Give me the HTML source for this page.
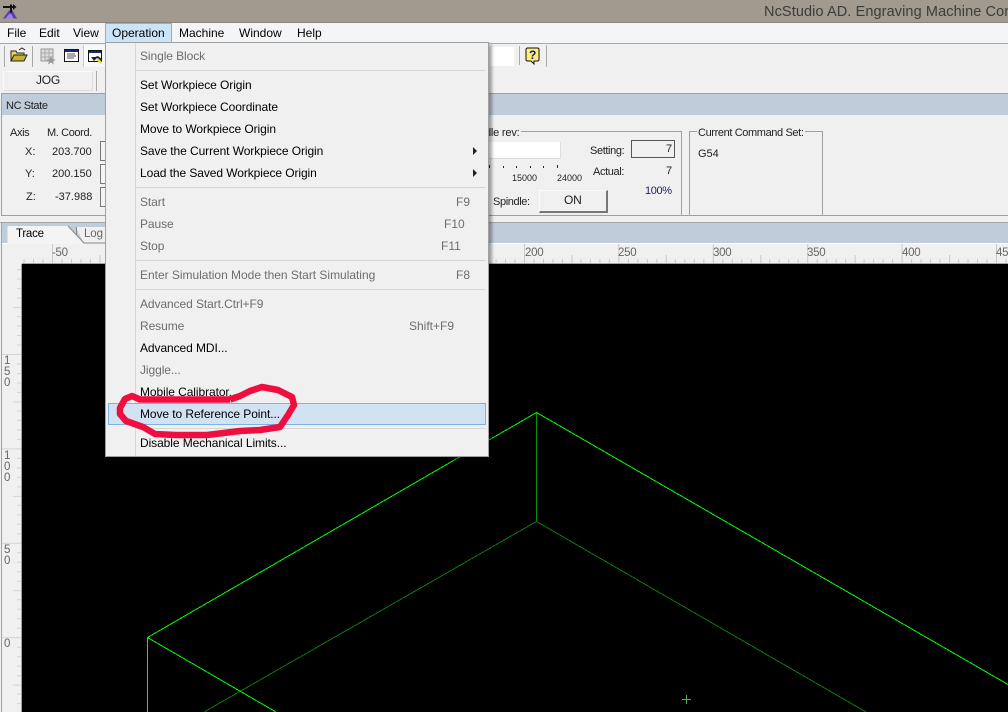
<!DOCTYPE html>
<html><head><meta charset="utf-8">
<style>
html,body{margin:0;padding:0;background:#f0f0f0}
#r{position:relative;width:1008px;height:712px;overflow:hidden;background:#f0f0f0;font-family:"Liberation Sans",sans-serif;font-size:12px;color:#000}
.b{position:absolute;box-sizing:border-box}
.t{position:absolute;white-space:nowrap;line-height:16px;height:16px}
.m{color:#000;left:140px;letter-spacing:-.08px}
.d{color:#6d6d6d}
.s{font-size:11px;color:#222;letter-spacing:-.38px}
.n{font-size:11px;color:#222}
.rl{font-size:11.5px;color:#666;letter-spacing:-.3px}
.sp{position:absolute;left:136px;width:350px;height:1px;background:#d7d7d7}
</style></head><body><div id="r">

<!-- title bar -->
<div class="b" style="left:0;top:0;width:1008px;height:23px;background:#a2998f;border-bottom:1px solid #8b847d"></div>
<svg class="b" style="left:0;top:0" width="22" height="22" viewBox="0 0 22 22"><path d="M3 18.500L9 10.500l2 1 1.500-1 4.500 8z" fill="#5b3fb0"/><path d="M5.500 18.500l4-5 2 1 2 4z" fill="#9a86e0"/><path d="M3 7h11M11 4.500v8" stroke="#111" stroke-width="2" fill="none"/><path d="M13 4l3.500 3-3.500 3z" fill="#111"/></svg>
<div class="t" style="left:764px;top:4px;font-size:14.5px;color:#3c3c3c;letter-spacing:.1px">NcStudio AD. Engraving Machine Control</div>

<!-- menu bar -->
<div class="b" style="left:0;top:23px;width:1008px;height:20px;background:#f4f5f7"></div>
<div class="b" style="left:0;top:43px;width:1008px;height:1px;background:#a8a8a8"></div>
<div class="b" style="left:105px;top:23px;width:67px;height:20px;background:#cce4f7;border:1px solid #7db2e4"></div>
<div class="t" style="left:7px;top:25px">File</div>
<div class="t" style="left:39px;top:25px">Edit</div>
<div class="t" style="left:73px;top:25px">View</div>
<div class="t" style="left:112px;top:25px">Operation</div>
<div class="t" style="left:179px;top:25px">Machine</div>
<div class="t" style="left:239px;top:25px">Window</div>
<div class="t" style="left:297px;top:25px">Help</div>

<!-- toolbar -->
<div class="b" style="left:4px;top:46px;width:1px;height:21px;background:#a8a8a8"></div>
<svg class="b" style="left:10px;top:47px" width="18" height="16" viewBox="0 0 18 16"><path d="M1 14V4h5l1 2h7v8z" fill="#e8d860" stroke="#222"/><path d="M1 14l3-6h13l-3 6z" fill="#c8b030" stroke="#222"/><path d="M9 3l3-2 3 2" stroke="#222" fill="none"/></svg>
<div class="b" style="left:32px;top:46px;width:1px;height:21px;background:#a8a8a8"></div>
<svg class="b" style="left:40px;top:48px" width="17" height="17" viewBox="0 0 17 17"><path d="M1 1h12v12H1z" fill="#ddd" stroke="#999"/><path d="M1 5h12M1 9h12M5 1v12M9 1v12" stroke="#aaa"/><path d="M11 8l1.500 3.500H16l-3 2 1 3-3-2-3 2 1-3-3-2h3.500z" fill="#999"/></svg>
<svg class="b" style="left:64px;top:49px" width="15" height="13" viewBox="0 0 15 13"><path d="M.5.500h14v12H.5z" fill="#fff" stroke="#111"/><path d="M1 1h13v2H1z" fill="#102a80"/><path d="M3 5h8M3 7h9M3 9h7" stroke="#555"/></svg>
<div class="b" style="left:83px;top:45px;width:23px;height:22px;background:#f8f8f8;border-left:1px solid #ccc"></div>
<svg class="b" style="left:88px;top:50px" width="15" height="15" viewBox="0 0 15 15"><path d="M.5.500h13v11H.5z" fill="#fff" stroke="#111"/><path d="M1 1h12v2H1z" fill="#102a80"/><path d="M3 7l3 4 3-3 4 5 1-4-4-3-3 1z" fill="#222"/><path d="M8 10l5 4 1-2-4-4z" fill="#e8dc40"/></svg>
<div class="b" style="left:490px;top:47px;width:24px;height:19px;background:#fff"></div>
<div class="b" style="left:519px;top:46px;width:1px;height:19px;background:#a8a8a8"></div>
<svg class="b" style="left:525px;top:47px" width="16" height="18" viewBox="0 0 16 18"><path d="M2 1h11l1 1v11l-1 1H9v3l-3-3H2l-1-1V2z" fill="#fff070" stroke="#111"/><text x="4" y="12" font-family="Liberation Sans" font-size="12" font-weight="bold" fill="#101090">?</text></svg>
<div class="b" style="left:546px;top:45px;width:1px;height:22px;background:#a8a8a8"></div>

<!-- mode row -->
<div class="b" style="left:3px;top:71px;width:90px;height:20px;border:1px solid #fafafa;border-right-color:#ddd;border-bottom-color:#ddd"></div>
<div class="t n" style="left:36px;top:72px;font-size:12px;letter-spacing:-.2px">JOG</div>
<div class="b" style="left:96px;top:71px;width:12px;height:20px;border-left:1px solid #aaa"></div>

<!-- NC state -->
<div class="b" style="left:1px;top:93px;width:1007px;height:123px;border-top:1px solid #a0a0a0;border-left:1px solid #a0a0a0;border-bottom:1px solid #a0a0a0"></div>
<div class="b" style="left:2px;top:94px;width:1006px;height:21px;background:#bfccd9"></div>
<div class="t s" style="left:6px;top:98px">NC State</div>
<div class="t s" style="left:10px;top:125px">Axis</div>
<div class="t s" style="left:47px;top:125px">M. Coord.</div>
<div class="t n" style="left:25px;top:144px">X:</div><div class="t n" style="left:52px;top:144px">203.700</div>
<div class="t n" style="left:25px;top:166px">Y:</div><div class="t n" style="left:52px;top:166px">200.150</div>
<div class="t n" style="left:26px;top:189px">Z:</div><div class="t n" style="left:55px;top:189px">-37.988</div>
<div class="b" style="left:100px;top:141px;width:10px;height:20px;border:1px solid #777;background:#f4f4f4"></div>
<div class="b" style="left:100px;top:164px;width:10px;height:20px;border:1px solid #777;background:#f4f4f4"></div>
<div class="b" style="left:100px;top:187px;width:10px;height:20px;border:1px solid #777;background:#f4f4f4"></div>

<!-- spindle group -->
<div class="b" style="left:480px;top:131px;width:202px;height:86px;border:1px solid #a0a0a0;border-bottom:0;border-left:0"></div>
<div class="t n" style="left:485px;top:125px;background:#f0f0f0;padding-right:2px;letter-spacing:-.2px">dle rev:</div>
<div class="b" style="left:480px;top:142px;width:81px;height:17px;background:#fff;border-right:1px solid #ddd;border-bottom:1px solid #ddd"></div>
<svg class="b" style="left:480px;top:164px" width="90" height="6"><path d="M9.500 1v3M23.500 2v2M36.500 2v2M50.500 2v2M63.500 2v2M77.500 1v3" stroke="#222"/></svg>
<div class="t" style="left:512px;top:170px;font-size:9px;color:#222">15000</div>
<div class="t" style="left:557px;top:170px;font-size:9px;color:#222">24000</div>
<div class="t s" style="left:590px;top:143px">Setting:</div>
<div class="b" style="left:631px;top:140px;width:44px;height:18px;border:1px solid #555;background:#f0f0f0"></div>
<div class="t n" style="left:666px;top:141px">7</div>
<div class="t s" style="left:593px;top:164px">Actual:</div>
<div class="t n" style="left:666px;top:163px">7</div>
<div class="t s" style="left:645px;top:183px;color:#202070">100%</div>
<div class="t s" style="left:493px;top:194px">Spindle:</div>
<div class="b" style="left:539px;top:190px;width:69px;height:23px;background:#f0f0f0;border:1px solid #fafafa;border-right:2px solid #777;border-bottom:2px solid #777"></div>
<div class="t n" style="left:564px;top:192px;font-size:12px;letter-spacing:-.2px">ON</div>

<!-- command set -->
<div class="b" style="left:689px;top:131px;width:134px;height:86px;border:1px solid #a0a0a0;border-bottom:0"></div>
<div class="t s" style="left:697px;top:125px;background:#f0f0f0;padding:0 1px">Current Command Set:</div>
<div class="t n" style="left:698px;top:146px">G54</div>

<!-- trace header -->
<div class="b" style="left:0;top:216px;width:1008px;height:7px;background:#f0f0f0"></div>
<div class="b" style="left:0;top:222px;width:1008px;height:1px;background:#a8a8a8"></div>
<div class="b" style="left:2px;top:223px;width:1006px;height:20px;background:#bfccd9"></div>
<div class="b" style="left:1px;top:222px;width:1px;height:490px;background:#a0a0a0"></div>
<svg class="b" style="left:6px;top:223px" width="105" height="22"><path d="M2 3H62l16 18H2z" fill="#f4f4f4"/><path d="M2 21V3" stroke="#f4f4f4"/><path d="M70 4h35v17H78z" fill="#f0f0f0"/><path d="M62 3l16 17h27" stroke="#888" fill="none"/><path d="M70.500 4v8" stroke="#888" fill="none"/></svg>
<div class="t" style="left:16px;top:226px;font-size:11.5px;letter-spacing:-.25px">Trace</div>
<div class="t" style="left:84px;top:226px;font-size:11.5px;letter-spacing:-.1px;color:#666">Log</div>
<div class="b" style="left:2px;top:243px;width:6px;height:1px;background:#fff"></div>
<div class="b" style="left:110px;top:243px;width:898px;height:1px;background:#fff"></div>

<!-- rulers -->
<svg class="b" style="left:0;top:244px" width="1008" height="20" shape-rendering="crispEdges">
<defs><pattern id="h" x="52" y="0" width="94.4" height="20" patternUnits="userSpaceOnUse"><path d="M.5 0v19M9.940 15v4M19.380 15v4M28.820 15v4M38.260 15v4M47.700 11v8M57.140 15v4M66.580 15v4M76.020 15v4M85.460 15v4" stroke="#cacaca" fill="none"/></pattern></defs>
<rect x="22" width="986" height="19" fill="url(#h)"/><rect x="22" y="19" width="986" height="1" fill="#a4a4a4"/></svg>
<svg class="b" style="left:0;top:264px" width="22" height="448" shape-rendering="crispEdges">
<defs><pattern id="v" x="0" y="90" width="22" height="94.4" patternUnits="userSpaceOnUse"><path d="M2 .5h19M17 9.940h4M17 19.380h4M17 28.820h4M17 38.260h4M13 47.700h8M17 57.140h4M17 66.580h4M17 76.020h4M17 85.460h4" stroke="#d4d4d4" fill="none"/></pattern></defs>
<rect x="2" width="20" height="448" fill="url(#v)"/><rect x="21" width="1" height="448" fill="#a4a4a4"/></svg>
<div class="t rl" style="left:52px;top:245px">-50</div>
<div class="t rl" style="left:525px;top:245px">200</div>
<div class="t rl" style="left:618px;top:245px">250</div>
<div class="t rl" style="left:713px;top:245px">300</div>
<div class="t rl" style="left:807px;top:245px">350</div>
<div class="t rl" style="left:902px;top:245px">400</div>
<div class="t rl" style="left:996px;top:245px">450</div>
<div class="t rl" style="left:4px;top:356px;line-height:11px;height:33px;width:9px;white-space:normal">1 5 0</div>
<div class="t rl" style="left:4px;top:451px;line-height:11px;height:33px;width:9px;white-space:normal">1 0 0</div>
<div class="t rl" style="left:4px;top:545px;line-height:11px;height:22px;width:9px;white-space:normal">5 0</div>
<div class="t rl" style="left:4px;top:636px">0</div>

<!-- canvas -->
<div class="b" style="left:22px;top:264px;width:986px;height:448px;background:#000"></div>
<svg class="b" style="left:0;top:0" width="1008" height="712" shape-rendering="crispEdges">
<path d="M536.500 521.500L204 712M536.500 521.500L866 712" stroke="#0a7a0a" fill="none"/>
<path d="M536.500 412.500V521" stroke="#0a8f0a" fill="none"/>
<path d="M147.500 637.500L536.500 412.500L1008 684.500M147.500 637.500V712M147.500 637.500L276 712" stroke="#00ff00" fill="none"/>
<path d="M686.500 695v9M682 699.500h9" stroke="#5aa85a" fill="none"/>
</svg>

<!-- dropdown menu -->
<div class="b" style="left:105px;top:42px;width:384px;height:415px;background:#f0f0f0;border:1px solid #a0a0a0;box-shadow:3px 3px 3px rgba(0,0,0,.35)"></div>
<div class="b" style="left:135px;top:43px;width:1px;height:413px;background:#d7d7d7"></div>
<div class="sp" style="top:70px"></div>
<div class="sp" style="top:187px"></div>
<div class="sp" style="top:260px"></div>
<div class="sp" style="top:289px"></div>
<div class="sp" style="top:428px"></div>
<div class="b" style="left:108px;top:403px;width:378px;height:22px;background:#d1e2f2;border:1px solid #7db2e4"></div>
<div class="t m d" style="top:48px">Single Block</div>
<div class="t m" style="top:77px">Set Workpiece Origin</div>
<div class="t m" style="top:99px">Set Workpiece Coordinate</div>
<div class="t m" style="top:121px">Move to Workpiece Origin</div>
<div class="t m" style="top:143px">Save the Current Workpiece Origin</div>
<div class="t m" style="top:165px">Load the Saved Workpiece Origin</div>
<svg class="b" style="left:472px;top:146px" width="6" height="32"><path d="M1 1l4 4-4 4zM1 23l4 4-4 4z" fill="#222"/></svg>
<div class="t m d" style="top:194px">Start</div><div class="t d" style="left:456px;top:194px">F9</div>
<div class="t m d" style="top:216px">Pause</div><div class="t d" style="left:444px;top:216px">F10</div>
<div class="t m d" style="top:238px">Stop</div><div class="t d" style="left:441px;top:238px">F11</div>
<div class="t m d" style="top:267px;letter-spacing:-.02px">Enter Simulation Mode then Start Simulating</div><div class="t d" style="left:456px;top:267px">F8</div>
<div class="t m d" style="top:296px">Advanced Start.Ctrl+F9</div>
<div class="t m d" style="top:318px">Resume</div><div class="t d" style="left:409px;top:318px">Shift+F9</div>
<div class="t m" style="top:340px">Advanced MDI...</div>
<div class="t m d" style="top:362px">Jiggle...</div>
<div class="t m" style="top:384px">Mobile Calibrator...</div>
<div class="t m" style="top:406px">Move to Reference Point...</div>
<div class="t m" style="top:435px">Disable Mechanical Limits...</div>

<!-- red scribble -->
<svg class="b" style="left:0;top:0" width="1008" height="712"><path d="M230 399.500L140 399.500L132 396L125 399L120 408L120 414L126 421L143 427L155 434L175 435L207 435L240 431L260 430L280 427L288 415L294 405L292 397L278 390L262 387L250 391L240 396L230 399.500" fill="none" stroke="#ef0e3f" stroke-width="6.5" stroke-linejoin="round"/></svg>

</div></body></html>
